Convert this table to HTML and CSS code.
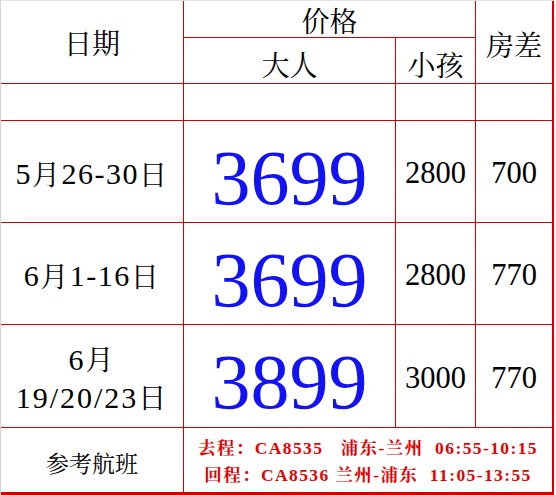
FILE: index.html
```html
<!DOCTYPE html>
<html lang="zh-CN">
<head>
<meta charset="utf-8">
<title>价格表</title>
<link rel="stylesheet" href="styles.css">
</head>
<body>
<div class="sheet">
  <div class="cell head date-head">日期</div>
  <div class="cell head price-head">价格</div>
  <div class="cell head room-head">房差</div>
  <div class="cell head sub">大人</div>
  <div class="cell head sub">小孩</div>

  <div class="cell blank"></div>
  <div class="cell blank"></div>
  <div class="cell blank"></div>
  <div class="cell blank"></div>

  <div class="cell date"><span class="lat">5</span>月<span class="lat">26-30</span>日</div>
  <div class="cell big lat">3699</div>
  <div class="cell num lat">2800</div>
  <div class="cell num lat">700</div>

  <div class="cell date"><span class="lat">6</span>月<span class="lat">1-16</span>日</div>
  <div class="cell big lat">3699</div>
  <div class="cell num lat">2800</div>
  <div class="cell num lat">770</div>

  <div class="cell date two"><span><span class="lat">6</span>月<br><span class="lat">19/20/23</span>日</span></div>
  <div class="cell big lat">3899</div>
  <div class="cell num lat">3000</div>
  <div class="cell num lat">770</div>

  <div class="cell flight-label">参考航班</div>
  <div class="cell flights">
    <div class="fl">去程：<span class="lat">CA8535&nbsp;&nbsp;&nbsp;</span>浦东<span class="lat">-</span>兰州<span class="lat">&nbsp;&nbsp;06:55-10:15</span></div>
    <div class="fl">回程：<span class="lat">CA8536&nbsp;</span>兰州<span class="lat">-</span>浦东<span class="lat">&nbsp;&nbsp;11:05-13:55</span></div>
  </div>
</div>
</body>
</html>
```

FILE: styles.css
```css
html, body {
  margin: 0;
  padding: 0;
  background: #ffffff;
}

.sheet {
  width: 551px;
  height: 491px;
  display: grid;
  grid-template-columns: 182px 211px 79px 76px;
  grid-template-rows: 36px 45px 36px 101px 101px 102px 64px;
  gap: 1px;
  background: #d60000;
  border-left: 1px solid #d4d4d4;
  border-top: 1px solid #e4e4e4;
  padding: 0 2px 3px 0;
  font-family: "Noto Serif CJK SC", "Noto Sans CJK SC", serif;
  color: #000000;
}

.lat {
  font-family: "Liberation Serif", "Times New Roman", serif;
}

.cell {
  background: #ffffff;
  display: flex;
  align-items: center;
  justify-content: center;
  text-align: center;
  line-height: 1.2;
}

.head {
  font-size: 28px;
}

.date-head {
  grid-row: 1 / 3;
  grid-column: 1;
  padding-top: 2px;
}

.price-head {
  grid-row: 1;
  grid-column: 2 / 4;
  padding-top: 4px;
}

.room-head {
  grid-row: 1 / 3;
  grid-column: 4;
  padding-top: 6px;
}

.sub {
  padding-top: 8px;
}

.date {
  font-size: 28px;
  padding-top: 4px;
  letter-spacing: 1.5px;
}

.date .lat {
  font-size: 30px;
}

.date.two {
  line-height: 37px;
  padding-top: 4px;
  letter-spacing: 2px;
}

.big {
  font-size: 78px;
  color: #1212f2;
  padding-top: 12px;
  line-height: 1;
}

.num {
  font-size: 30.5px;
  padding-top: 4px;
}

.flight-label {
  font-size: 23px;
  padding-top: 6px;
}

.flights {
  grid-column: 2 / 5;
  flex-direction: column;
  color: #e60000;
  font-weight: bold;
  font-size: 17.5px;
  letter-spacing: 1.4px;
  line-height: 25px;
  padding-top: 2px;
}

.fl {
  white-space: nowrap;
}
```
